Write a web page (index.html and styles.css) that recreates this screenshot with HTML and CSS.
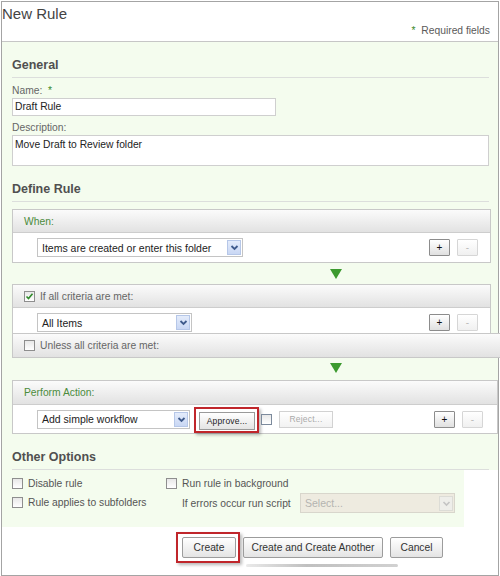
FILE: index.html
```html
<!DOCTYPE html>
<html>
<head>
<meta charset="utf-8">
<link rel="stylesheet" href="styles.css">
</head>
<body>
<div class="page">
  <div class="head">
    <div class="title">New Rule</div>
    <div class="req"><span class="star">*</span>&nbsp; Required fields</div>
  </div>
  <div class="body">
    <div class="section-h">General</div>
    <div class="lbl lbl-name">Name: &nbsp;<span class="star">*</span></div>
    <div class="input name-input">Draft Rule</div>
    <div class="lbl lbl-desc">Description:</div>
    <div class="input textarea">Move Draft to Review folder</div>
    <div class="section-h">Define Rule</div>

    <div class="box box-when">
      <div class="box-h"><span class="green">When:</span></div>
      <div class="box-row">
        <div class="select sel-when"><span class="sel-text">Items are created or enter this folder</span><span class="arrow"><svg width="11" height="11" viewBox="0 0 11 11"><path d="M2.5 4 L5.5 7 L8.5 4" fill="none" stroke="#3f5b8c" stroke-width="1.8"/></svg></span></div>
        <div class="pm"><span class="pb">+</span><span class="mb">-</span></div>
      </div>
    </div>

    <div class="tri-row"><span class="tri"></span></div>

    <div class="box box-if">
      <div class="box-h"><span class="cb checked"><svg width="9" height="9" viewBox="0 0 9 9"><path d="M1.5 4.5 L3.5 6.5 L7.5 1.8" fill="none" stroke="#2f8a2a" stroke-width="1.6"/></svg></span>If all criteria are met:</div>
      <div class="box-row row-if">
        <div class="select sel-all"><span class="sel-text">All Items</span><span class="arrow"><svg width="11" height="11" viewBox="0 0 11 11"><path d="M2.5 4 L5.5 7 L8.5 4" fill="none" stroke="#3f5b8c" stroke-width="1.8"/></svg></span></div>
        <div class="pm"><span class="pb">+</span><span class="mb">-</span></div>
      </div>
    </div>
    <div class="unless"><span class="cb"></span>Unless all criteria are met:</div>

    <div class="tri-row tri-row2"><span class="tri"></span></div>

    <div class="box box-act">
      <div class="box-h"><span class="green">Perform Action:</span></div>
      <div class="box-row row-act">
        <div class="select sel-act"><span class="sel-text">Add simple workflow</span><span class="arrow"><svg width="11" height="11" viewBox="0 0 11 11"><path d="M2.5 4 L5.5 7 L8.5 4" fill="none" stroke="#3f5b8c" stroke-width="1.8"/></svg></span></div>
        <div class="hl hl-approve"><span class="small-btn">Approve...</span></div>
        <span class="cb cb-small"></span>
        <span class="small-btn disabled">Reject...</span>
        <div class="pm"><span class="pb">+</span><span class="mb">-</span></div>
      </div>
    </div>

    <div class="section-h">Other Options</div>
    <div class="options">
      <div class="opt-col1">
        <div class="opt"><span class="cb"></span>Disable rule</div>
        <div class="opt"><span class="cb"></span>Rule applies to subfolders</div>
      </div>
      <div class="opt-col2">
        <div class="opt"><span class="cb"></span>Run rule in background</div>
        <div class="opt opt-err"><span class="err-lbl">If errors occur run script</span><div class="select sel-dis"><span class="sel-text">Select...</span><span class="arrow dis"><svg width="11" height="11" viewBox="0 0 11 11"><path d="M2.5 4 L5.5 7 L8.5 4" fill="none" stroke="#c4c4c4" stroke-width="1.6"/></svg></span></div></div>
      </div>
      <div class="filler"></div>
    </div>
  </div>
  <div class="foot">
    <div class="foot-row">
      <div class="hl hl-create"><span class="btn btn-create">Create</span></div>
      <span class="btn btn-another">Create and Create Another</span>
      <span class="btn btn-cancel">Cancel</span>
    </div>
    <div class="smear"></div>
  </div>
</div>
</body>
</html>
```

FILE: styles.css
```css
* { box-sizing: border-box; }
html, body { margin: 0; padding: 0; background: #fff; }
body {
  font-family: "Liberation Sans", Arial, sans-serif;
  color: #555;
  width: 500px;
  height: 576px;
  overflow: hidden;
}
.page {
  margin: 1px 0 0 1px;
  width: 498px;
  height: 575px;
  border: 1px solid #a4a4a4;
  display: flex;
  flex-direction: column;
}
.head {
  height: 40px;
  border-bottom: 1px solid #c6c6c6;
  padding: 3px 8px 0 0;
  flex: none;
}
.title { font-size: 15px; line-height: 18px; color: #444; }
.req { text-align: right; font-size: 10.3px; line-height: 13px; margin-top: 1px; color: #5a5a5a; }
.star { color: #3a8a2a; }

.body {
  background: #f4fcee;
  padding: 0 7px 0 10px;
  flex: none;
}
.section-h {
  font-size: 12.5px;
  font-weight: bold;
  color: #505050;
  line-height: 16px;
  margin: 15px 2px 0 0;
  padding-bottom: 4px;
  border-bottom: 1px solid #dcdedc;
}
.lbl { font-size: 10.3px; line-height: 13px; color: #666; }
.lbl-name { margin-top: 6px; }
.lbl-desc { margin-top: 5px; }
.input {
  background: #fff;
  border: 1px solid #cfcfcf;
  font-size: 10.3px;
  color: #222;
  padding-left: 2px;
}
.name-input { margin-top: 1px; width: 264px; height: 18px; line-height: 16px; }
.textarea { margin-top: 1px; width: 477px; height: 31px; padding-top: 2px; line-height: 13px; }

.box { margin-top: 7px; border: 1px solid #c8c8c8; background: #fff; }
.box-h, .unless {
  height: 23px;
  border-bottom: 1px solid #cdcdcd;
  background: linear-gradient(#fbfbfb, #e2e2e2);
  display: flex;
  align-items: center;
  padding-left: 11px;
  font-size: 10.3px;
  color: #666;
}
.green { color: #4b8b3b; }
.box-row {
  display: flex;
  align-items: center;
  height: 29px;
  padding: 0 12px 0 24px;
}
.box-if { margin-top: 0; border-bottom: none; }
.row-if { height: 25px; align-items: flex-start; padding-top: 5px; }
.row-if .pm { margin-top: 1px; }
.unless {
  height: 25px;
  border: 1px solid #c8c8c8;
  margin-right: -10px;
}
.box-act { margin-top: 0; margin-right: -7px; }
.box-act .box-h { height: 24px; }
.row-act { height: 28px; padding-right: 14px; }

.select {
  display: flex;
  align-items: center;
  justify-content: space-between;
  height: 19px;
  border: 1px solid #c4c4c4;
  background: #fff;
  padding: 0 1px 0 4px;
}
.sel-text { font-size: 10.5px; color: #222; }
.arrow {
  width: 14px;
  height: 15px;
  background: linear-gradient(#e4ecfb, #c9d7f4);
  border: 1px solid #b6c7e8;
  display: flex;
  align-items: center;
  justify-content: center;
}
.arrow.dis { background: #eeeeea; border-color: #dcdcd6; }
.sel-when { width: 206px; }
.sel-all { width: 155px; height: 19px; }
.sel-act { width: 153px; height: 19px; }

.pm { margin-left: auto; display: flex; }
.pb, .mb {
  width: 21px;
  height: 17px;
  border: 1px solid #8c8c8c;
  border-radius: 1px;
  background: linear-gradient(#ffffff, #e0e0e0);
  font-size: 10px;
  line-height: 15px;
  text-align: center;
  color: #111;
}
.mb { margin-left: 7px; border-color: #d6d6d6; color: #bbb; background: linear-gradient(#ffffff, #f0f0f0); }

.tri-row { height: 21px; padding: 6px 0 0 318px; }
.tri-row2 { height: 22px; padding-top: 5px; }
.tri {
  display: block;
  width: 0;
  height: 0;
  border-left: 6px solid transparent;
  border-right: 6px solid transparent;
  border-top: 10px solid #3c9a2f;
}

.cb {
  width: 11px;
  height: 11px;
  border: 1px solid #8e8e8e;
  background: linear-gradient(#e8e8e8, #ffffff);
  margin-right: 5px;
  flex: none;
  display: flex;
  align-items: center;
  justify-content: center;
}

.hl {
  border: 2px solid #c0262b;
  box-shadow: 2px 2px 3px rgba(0,0,0,0.28);
  flex: none;
}
.hl-approve { margin-left: 4px; padding: 3px 2px 1px 3px; margin-top: 2px; }
.small-btn {
  display: flex;
  align-items: center;
  justify-content: center;
  width: 56px;
  height: 18px;
  border: 1px solid #9a9a9a;
  background: linear-gradient(#ffffff, #e4e4e4);
  font-size: 8.5px;
  color: #222;
  letter-spacing: 0.2px;
}
.small-btn.disabled {
  width: 54px;
  border-color: #d2d2d2;
  background: linear-gradient(#ffffff, #f2f2f2);
  color: #aaa;
  margin-left: 7px;
  height: 17px;
}
.cb-small { margin: 0 0 0 2px; width: 11px; height: 11px; border-color: #7c8a9c; }

.options {
  display: flex;
  height: 57px;
  padding-top: 4px;
  margin-right: -7px;
}
.opt-col1 { width: 154px; }
.opt-col2 { flex: 1; }
.filler { width: 34px; background: #fff; margin-top: -4px; }
.opt {
  display: flex;
  align-items: center;
  height: 19px;
  font-size: 10.3px;
  color: #555;
}
.opt-err { padding-left: 16px; height: 20px; }
.err-lbl { width: 118px; }
.sel-dis {
  width: 155px;
  height: 20px;
  background: #eeebe0;
  border-color: #d8d6cc;
}
.sel-dis .sel-text { color: #b4b4b0; }

.foot {
  flex: 1;
  background: #fff;
  padding: 5px 0 0 174px;
}
.foot-row { display: flex; align-items: center; }
.hl-create { padding: 3px 2px 3px 4px; }
.btn {
  display: flex;
  align-items: center;
  justify-content: center;
  height: 21px;
  border: 1px solid #9c9c9c;
  border-radius: 2px;
  background: linear-gradient(#ffffff, #e4e4e4);
  font-size: 10.3px;
  color: #333;
}
.btn-create { width: 54px; }
.btn-another { width: 140px; margin-left: 3px; }
.btn-cancel { width: 53px; margin-left: 7px; }
.smear {
  margin: 1px 0 0 70px;
  width: 152px;
  height: 3px;
  background: linear-gradient(90deg, rgba(150,150,150,0.2), rgba(140,140,140,0.55) 40%, rgba(140,140,140,0.4));
  border-radius: 2px;
  filter: blur(0.6px);
}
```
